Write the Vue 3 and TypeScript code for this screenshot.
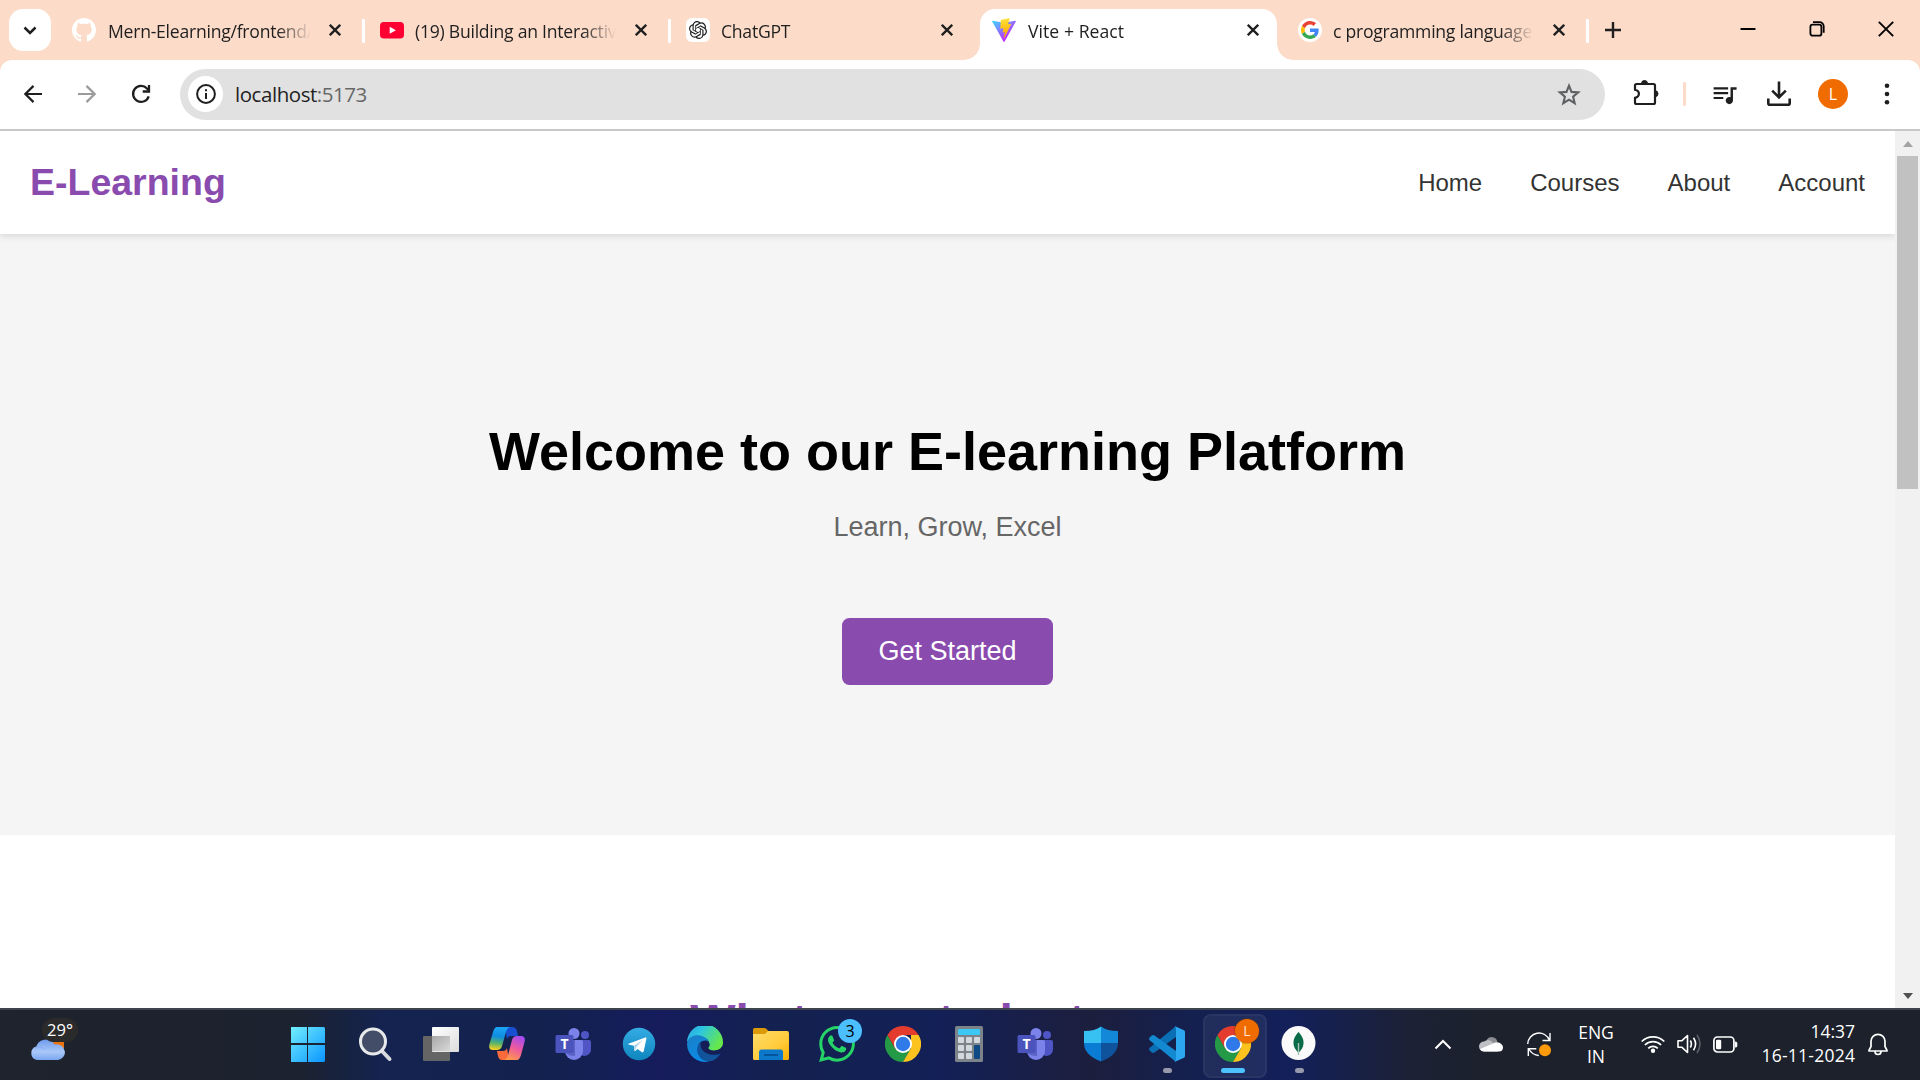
<script setup lang="ts">
interface Tab {
  id: string
  title: string
  active?: boolean
  divider?: boolean
}

const tabs: Tab[] = [
  { id: 'github', title: 'Mern-Elearning/frontend/src', divider: true },
  { id: 'youtube', title: '(19) Building an Interactive', divider: true },
  { id: 'chatgpt', title: 'ChatGPT' },
  { id: 'vite', title: 'Vite + React', active: true },
  { id: 'google', title: 'c programming language', divider: true },
]

const links: string[] = ['Home', 'Courses', 'About', 'Account']

const apps: string[] = [
  'start', 'search', 'views', 'copilot', 'teams', 'telegram', 'edge', 'folder',
  'whatsapp', 'chrome', 'calc', 'teams', 'shield', 'vscode', 'chromeL', 'mongo',
]
</script>

<template>
  <div class="screen">
    <div class="tabstrip">
      <button class="tab-search">
        <svg width="14" height="9" viewBox="0 0 14 9"><path d="M1.5 1.5 7 7l5.500-5.500" fill="none" stroke="#1f1f1f" stroke-width="2.500" /></svg>
      </button>
      <div v-for="t in tabs" :key="t.id" class="tab" :class="[{ active: t.active, divider: t.divider }, t.id]">
        <svg v-if="t.id === 'github'" class="fav" viewBox="0 0 16 16"><path fill="#fff" d="M8 0C3.58 0 0 3.58 0 8c0 3.54 2.29 6.53 5.47 7.59.4.07.55-.17.55-.38 0-.19-.01-.82-.01-1.490-2.010.37-2.530-.49-2.690-.94-.09-.23-.48-.94-.82-1.130-.28-.15-.68-.52-.01-.53.63-.01 1.080.58 1.230.82.72 1.210 1.870.87 2.330.66.07-.52.28-.87.51-1.070-1.780-.2-3.640-.89-3.640-3.950 0-.87.31-1.590.82-2.150-.08-.2-.36-1.020.08-2.120 0 0 .67-.21 2.200.82.64-.18 1.320-.27 2-.27.68 0 1.360.09 2 .27 1.530-1.040 2.200-.82 2.200-.82.44 1.100.16 1.920.08 2.120.51.56.82 1.270.82 2.150 0 3.070-1.870 3.750-3.650 3.950.29.25.54.73.54 1.480 0 1.070-.01 1.930-.01 2.200 0 .21.15.46.55.38A8.013 8.013 0 0 0 16 8c0-4.420-3.580-8-8-8z" /></svg>
        <svg v-else-if="t.id === 'youtube'" class="fav" viewBox="0 0 24 24"><rect y="4" width="24" height="16.500" rx="3.800" fill="#f03" /><path d="M9.700 8.700v7l6.200-3.500z" fill="#fff" /></svg>
        <svg v-else-if="t.id === 'chatgpt'" class="fav" viewBox="0 0 24 24"><rect width="24" height="24" rx="6" fill="#fff" /><g transform="translate(3 3) scale(.75)"><path fill="#1f1f1f" d="M22.2819 9.8211a5.9847 5.9847 0 0 0-.5157-4.9108 6.0462 6.0462 0 0 0-6.5098-2.9A6.0651 6.0651 0 0 0 4.9807 4.1818a5.9847 5.9847 0 0 0-3.9977 2.9 6.0462 6.0462 0 0 0 .7427 7.0966 5.98 5.98 0 0 0 .511 4.9107 6.051 6.051 0 0 0 6.5146 2.9001A5.9847 5.9847 0 0 0 13.2599 24a6.0557 6.0557 0 0 0 5.7718-4.2058 5.9894 5.9894 0 0 0 3.9977-2.9001 6.0557 6.0557 0 0 0-.7475-7.0729zm-9.022 12.6081a4.4755 4.4755 0 0 1-2.8764-1.0408l.1419-.0804 4.7783-2.7582a.7948.7948 0 0 0 .3927-.6813v-6.7369l2.02 1.1686a.071.071 0 0 1 .038.052v5.5826a4.504 4.504 0 0 1-4.4945 4.4944zm-9.6607-4.1254a4.4708 4.4708 0 0 1-.5346-3.0137l.142.0852 4.783 2.7582a.7712.7712 0 0 0 .7806 0l5.8428-3.3685v2.3324a.0804.0804 0 0 1-.0332.0615L9.74 19.9502a4.4992 4.4992 0 0 1-6.1408-1.6464zM2.3408 7.8956a4.485 4.485 0 0 1 2.3655-1.9728V11.6a.7664.7664 0 0 0 .3879.6765l5.8144 3.3543-2.0201 1.1685a.0757.0757 0 0 1-.071 0l-4.8303-2.7865A4.504 4.504 0 0 1 2.3408 7.872zm16.5963 3.8558L13.1038 8.364 15.1192 7.2a.0757.0757 0 0 1 .071 0l4.8303 2.7913a4.4944 4.4944 0 0 1-.6765 8.1042v-5.6772a.79.79 0 0 0-.407-.667zm2.0107-3.0231l-.142-.0852-4.7735-2.7818a.7759.7759 0 0 0-.7854 0L9.409 9.2297V6.8974a.0662.0662 0 0 1 .0284-.0615l4.8303-2.7866a4.4992 4.4992 0 0 1 6.6802 4.66zM8.3065 12.863l-2.02-1.1638a.0804.0804 0 0 1-.038-.0567V6.0742a4.4992 4.4992 0 0 1 7.3757-3.4537l-.142.0805L8.704 5.459a.7948.7948 0 0 0-.3927.6813zm1.0976-2.3654l2.602-1.4998 2.6069 1.4998v2.9994l-2.5974 1.4997-2.6067-1.4997Z" /></g></svg>
        <svg v-else-if="t.id === 'vite'" class="fav" viewBox="0 0 256 257">
          <defs>
            <linearGradient id="viteA" x1="0" x2=".58" y1=".08" y2=".79"><stop stop-color="#41D1FF" /><stop offset="1" stop-color="#BD34FE" /></linearGradient>
            <linearGradient id="viteB" x1=".43" x2=".5" y1=".02" y2=".9"><stop stop-color="#FFEA83" /><stop offset=".08" stop-color="#FFDD35" /><stop offset="1" stop-color="#FFA800" /></linearGradient>
          </defs>
          <path fill="url(#viteA)" d="M255.153 37.938 134.897 252.976c-2.483 4.440-8.862 4.466-11.382.048L.875 37.958c-2.746-4.814 1.371-10.646 6.827-9.670l120.385 21.517a6.537 6.537 0 0 0 2.322-.004l117.867-21.483c5.438-.991 9.574 4.796 6.877 9.620Z" />
          <path fill="url(#viteB)" d="M185.432.063 96.440 17.501a3.268 3.268 0 0 0-2.634 3.014l-5.474 92.456a3.268 3.268 0 0 0 3.997 3.378l24.777-5.718c2.318-.535 4.413 1.507 3.936 3.838l-7.361 36.047c-.495 2.426 1.782 4.500 4.151 3.780l15.304-4.649c2.372-.72 4.652 1.360 4.150 3.788l-11.698 56.621c-.732 3.542 3.979 5.473 5.943 2.437l1.313-2.028 72.516-144.720c1.215-2.423-.88-5.186-3.540-4.672l-25.505 4.922c-2.396.462-4.435-1.770-3.759-4.114l16.646-57.705c.677-2.350-1.370-4.583-3.769-4.113Z" />
        </svg>
        <svg v-else class="fav" viewBox="0 0 24 24"><circle cx="12" cy="12" r="12" fill="#fff" /><g transform="translate(3 3) scale(.375)"><path fill="#EA4335" d="M24 9.500c3.540 0 6.710 1.220 9.210 3.600l6.850-6.850C35.900 2.380 30.470 0 24 0 14.620 0 6.510 5.380 2.560 13.220l7.980 6.190C12.430 13.720 17.740 9.500 24 9.500z" /><path fill="#4285F4" d="M46.980 24.550c0-1.570-.15-3.090-.38-4.550H24v9.020h12.940c-.58 2.960-2.260 5.480-4.780 7.180l7.730 6c4.510-4.180 7.090-10.360 7.090-17.650z" /><path fill="#FBBC05" d="M10.530 28.590c-.48-1.450-.76-2.990-.76-4.590s.27-3.140.76-4.590l-7.980-6.190C.92 16.460 0 20.120 0 24c0 3.880.92 7.540 2.560 10.780l7.970-6.190z" /><path fill="#34A853" d="M24 48c6.480 0 11.930-2.130 15.890-5.810l-7.730-6c-2.150 1.450-4.920 2.300-8.160 2.300-6.260 0-11.570-4.220-13.470-9.910l-7.980 6.190C6.510 42.620 14.620 48 24 48z" /></g></svg>
        <span class="title">{{ t.title }}</span>
        <svg class="close" viewBox="0 0 12 12"><path d="M.8.8l10.400 10.400M11.200.8.8 11.200" stroke="#1f1f1f" stroke-width="2.300" /></svg>
      </div>
      <svg class="plus" viewBox="0 0 16 16"><path d="M8 0v16M0 8h16" stroke="#1f1f1f" stroke-width="2.400" /></svg>
      <div class="win">
        <svg width="16" height="16" viewBox="0 0 16 16"><path d="M.500 8h15" stroke="#000" stroke-width="2" /></svg>
        <svg width="16" height="16" viewBox="0 0 16 16"><g fill="none" stroke="#000" stroke-width="1.800"><rect x="1.400" y="3.700" width="11" height="11" rx="2.300" /><path d="M4 1.100h6.500a4.200 4.200 0 0 1 4.200 4.200v6.500" /></g></svg>
        <svg width="16" height="16" viewBox="0 0 16 16"><path d="M.800.800l14.400 14.400M15.200.8.800 15.200" stroke="#000" stroke-width="1.900" /></svg>
      </div>
    </div>

    <div class="toolbar">
      <svg class="back" width="18" height="18" viewBox="0 0 18 18"><path d="M18 9H1.500M9.500.900 1.400 9l8.100 8.100" fill="none" stroke="#1f1f1f" stroke-width="2.200" /></svg>
      <svg class="fwd" width="18" height="18" viewBox="0 0 18 18"><path d="M0 9h16.500M8.500.900 16.600 9l-8.100 8.100" fill="none" stroke="#9b9b9b" stroke-width="2.200" /></svg>
      <svg class="reload" width="20" height="20" viewBox="0 0 20 20"><path d="M17.700 12.300A8 8 0 1 1 16 4.500L17.700 6.200" fill="none" stroke="#1f1f1f" stroke-width="2.300" /><path d="M18 1v6.500h-6.300" fill="none" stroke="#1f1f1f" stroke-width="2.300" /></svg>
      <div class="omnibox">
        <span class="info"><svg width="20" height="20" viewBox="0 0 20 20"><circle cx="10" cy="10" r="8.900" fill="none" stroke="#1f1f1f" stroke-width="2" /><path d="M10 9v6M10 5.200v2" stroke="#1f1f1f" stroke-width="2" /></svg></span>
        <span class="url">localhost<i>:5173</i></span>
        <svg class="star" width="24" height="23" viewBox="0 0 24 23"><path d="m12 2.700 2.500 6.200 6.700.5-5.100 4.300 1.600 6.500-5.700-3.500-5.700 3.500 1.600-6.500-5.100-4.300 6.700-.5z" fill="none" stroke="#5f6164" stroke-width="2.100" /></svg>
      </div>
      <svg class="puzzle" width="26" height="26" viewBox="0 0 26 26"><path d="M3.500 4h17q1.500 0 1.500 1.500v17q0 1.500-1.500 1.500h-17Q2 24 2 22.500v-4.600c5.200-1.200 5.200-7 0-8.200V5.500Q2 4 3.500 4z" fill="none" stroke="#1f1f1f" stroke-width="2.200" /><path d="M8.500 3.500a3 3 0 0 1 6 0zM22 10.700a3 3 0 0 1 0 6z" fill="#1f1f1f" stroke="#1f1f1f" /></svg>
      <span class="rule"></span>
      <svg class="queue" width="29" height="29" viewBox="0 0 24 24"><path fill="#1f1f1f" d="M15 6H3v1.800h12V6zm0 4H3v1.800h12V10zM3 15.800h8V14H3v1.800zM17 6v8.180c-.31-.11-.65-.18-1-.18-1.660 0-3 1.340-3 3s1.340 3 3 3 3-1.340 3-3V8h3V6h-5z" /></svg>
      <svg class="dl" width="24" height="26" viewBox="0 0 24 26"><path d="M12 .500v16M5.200 9.700 12 16.500l6.800-6.800M1.300 17.500v4.700q0 1.500 1.500 1.500h18.400q1.500 0 1.500-1.500v-4.700" fill="none" stroke="#1f1f1f" stroke-width="2.600" /></svg>
      <span class="avatar">L</span>
      <svg class="dots" width="6" height="22" viewBox="0 0 6 22" fill="#1f1f1f"><circle cx="3" cy="2.700" r="2.300" /><circle cx="3" cy="11" r="2.300" /><circle cx="3" cy="19.300" r="2.300" /></svg>
    </div>

    <div class="viewport">
      <div class="page">
        <header>
          <div class="logo">E-Learning</div>
          <nav><a v-for="l in links" :key="l">{{ l }}</a></nav>
        </header>
        <section class="hero">
          <h1>Welcome to our E-learning Platform</h1>
          <p>Learn, Grow, Excel</p>
          <button class="cta">Get Started</button>
        </section>
        <h2>What our students say</h2>
      </div>
      <div class="scrollbar">
        <i class="up"></i>
        <i class="thumb"></i>
        <i class="down"></i>
      </div>
    </div>

    <footer class="taskbar">
      <div class="weather">
        <svg width="37" height="24" viewBox="0 0 37 24">
          <defs><linearGradient id="cl" x2="0" y2="1"><stop stop-color="#6f9bec" /><stop offset=".6" stop-color="#a9c8f8" /><stop offset="1" stop-color="#7aa6f0" /></linearGradient></defs>
          <path d="M24 5h11v6H24z" fill="#e8730c" /><path d="M7 11a10 10 0 0 1 18.500-3.500A8.500 8.500 0 0 1 36 15a8 8 0 0 1-7 8H8A7 7 0 0 1 7 9.500z" fill="url(#cl)" /><path d="M7 10q6-1 9 3M19 9q2-3 6-2" stroke="#86aef3" fill="none" />
        </svg>
        <span class="temp">29°</span>
      </div>
      <div class="apps">
        <div v-for="(a, i) in apps" :key="i" class="app" :class="{ current: a === 'chromeL', running: a === 'vscode' || a === 'mongo' }">
          <svg v-if="a === 'start'" viewBox="2 0 36 36">
            <defs><linearGradient id="st" x2="1" y2="1"><stop stop-color="#74f0ff" /><stop offset="1" stop-color="#0a95ff" /></linearGradient></defs>
            <path fill="url(#st)" d="M2.500 1H18v16H1V2.500Q1 1 2.500 1zM19 1h15.500Q36 1 36 2.500V17H19zM1 19h17v17H2.500Q1 36 1 34.500zM19 19h17v15.500q0 1.500-1.500 1.500H19z" />
          </svg>
          <svg v-else-if="a === 'search'" viewBox="1 0 36 36"><path d="m25 24 8.500 9" stroke="#d8dadd" stroke-width="4" stroke-linecap="round" /><circle cx="17" cy="15.500" r="12.500" fill="#434d68" stroke="#e8e9ea" stroke-width="3" /></svg>
          <svg v-else-if="a === 'views'" viewBox="0 0 36 36">
            <defs>
              <linearGradient id="tv" x2="1" y2="1"><stop stop-color="#fff" /><stop offset="1" stop-color="#dcdcdc" /></linearGradient>
              <linearGradient id="tw" x2="1" y2="1"><stop stop-color="#a8a8a8" /><stop offset="1" stop-color="#d8d8d8" /></linearGradient>
            </defs>
            <rect y="10" width="27" height="25" rx="1" fill="#656565" /><rect x="9" y="1" width="27" height="25" rx="1" fill="url(#tv)" /><path d="M9 10h18v15H9z" fill="url(#tw)" />
          </svg>
          <svg v-else-if="a === 'copilot'" viewBox="0 0 36 36">
            <defs>
              <linearGradient id="cpa" x1=".4" x2=".3" y2="1"><stop stop-color="#1ba4f5" /><stop offset=".4" stop-color="#0f8de0" /><stop offset=".7" stop-color="#56b36c" /><stop offset="1" stop-color="#ffd21d" /></linearGradient>
              <linearGradient id="cpb" x1=".7" x2=".3" y2="1"><stop stop-color="#a44cf0" /><stop offset=".5" stop-color="#ef5a9c" /><stop offset="1" stop-color="#ff9a4a" /></linearGradient>
            </defs>
            <path d="M16 1h7q4 0 5 4l1 5h-7q-3 0-4 3z" fill="#174fd0" /><path d="M20 34h-7q-3 0-4-4l-1-5h6q3 0 4-3z" fill="#fb6a3b" />
            <path d="M8 1h13q-3 1-4 5l-4 14q-1 4-5 4H4q-5 0-3.500-6L4 6q1.500-5 4-5z" fill="url(#cpa)" />
            <path d="M28 34H15q3-1 4-5l4-15q1-4 5-4h4q5 0 3.500 6L32 29q-1.500 5-4 5z" fill="url(#cpb)" />
          </svg>
          <svg v-else-if="a === 'teams'" viewBox="0 0 36 36">
            <circle cx="30" cy="9" r="4" fill="#4f55c4" /><path d="M25 14h9q2 0 2 2v7a6.500 6.500 0 0 1-11 5z" fill="#4f55c4" />
            <circle cx="19" cy="7.500" r="5.500" fill="#7b83eb" /><path d="M10 14h16q2 0 2 2v9a9 9 0 0 1-18 0z" fill="#7b83eb" />
            <path d="M10 14h10v16q-7 0-9-3z" fill="#5a62c6" /><rect x=".500" y="9" width="18" height="18" rx="1.500" fill="#4b53bc" />
            <text x="9.500" y="23" text-anchor="middle" font-family="Open Sans, sans-serif" font-size="14" font-weight="700" fill="#fff">T</text>
          </svg>
          <svg v-else-if="a === 'telegram'" viewBox="0 0 36 36">
            <defs><linearGradient id="tg" x2="0" y2="1"><stop stop-color="#34abe2" /><stop offset="1" stop-color="#0e86be" /></linearGradient></defs>
            <circle cx="18" cy="18" r="16.200" fill="url(#tg)" /><path d="M7.500 17.800 24.200 11.400q1.600-.5 1.200 1.400l-2.700 12.500q-.5 1.700-2 .8l-4.200-3.200-2.200 2q-.8.600-.9-.700l-.5-4.400-5.400-1.300q-1-.3 0-.7z" fill="#fff" /><path d="m13 19.800 8.500-5.700-6.200 7-.9 3.500z" fill="#a9d3e8" />
          </svg>
          <svg v-else-if="a === 'edge'" viewBox="0 0 36 36">
            <defs>
              <linearGradient id="ea" x2="1" y2=".5"><stop stop-color="#2b9fe0" /><stop offset=".4" stop-color="#2cc5e2" /><stop offset="1" stop-color="#66e84c" /></linearGradient>
              <linearGradient id="eb" x2=".4" y2="1"><stop stop-color="#1b7fc4" /><stop offset="1" stop-color="#0a8be8" /></linearGradient>
            </defs>
            <path d="M0 16A18 18 0 0 1 36 17c0 8-12 9-14.500 5.500-.5-1.500 2-2 1-5C21 11 6 7 0 16z" fill="url(#ea)" />
            <path d="M0 18C1 10 9 8 15 10c3 1 6 3 7 5-6-2-11 1-11 7 0 6 4 12 11 13.500A18 18 0 0 1 0 18z" fill="url(#eb)" />
            <path d="M14 16c-8 6-3 20 9 19.300 5-.8 8.500-4.300 10.500-7.800-6 3-17 1-19.500-6q-1-3 0-5.500z" fill="#11549c" />
          </svg>
          <svg v-else-if="a === 'folder'" viewBox="0 0 36 36">
            <defs><linearGradient id="fd" x2="1" y2="1"><stop stop-color="#ffdc6b" /><stop offset=".6" stop-color="#ffcb3a" /><stop offset="1" stop-color="#f7ae00" /></linearGradient></defs>
            <path d="M0 3.500Q0 2 1.500 2H11q1.500 0 2.500 1l2 2v7H0z" fill="#dd9a08" /><path d="M0 8h12l3-3h19q2 0 2 2v25.500q0 1.500-1.500 1.500h-33Q0 34 0 32.500z" fill="url(#fd)" /><path d="M6 34v-8q0-2.500 2.500-2.500h19Q30 23.500 30 26v8z" fill="#0b78ca" /><path d="M11 29h14" stroke="#064d91" stroke-width="1.600" />
          </svg>
          <svg v-else-if="a === 'whatsapp'" viewBox="0 0 24 24"><path fill="#25D366" d="M17.472 14.382c-.297-.149-1.758-.867-2.030-.967-.273-.099-.471-.148-.67.15-.197.297-.767.966-.94 1.164-.173.199-.347.223-.644.075-.297-.15-1.255-.463-2.390-1.475-.883-.788-1.480-1.761-1.653-2.059-.173-.297-.018-.458.13-.606.134-.133.298-.347.446-.52.149-.174.198-.298.298-.497.099-.198.05-.371-.025-.52-.075-.149-.669-1.612-.916-2.207-.242-.579-.487-.5-.669-.51-.173-.008-.371-.01-.57-.01-.198 0-.52.074-.792.372-.272.297-1.040 1.016-1.040 2.479 0 1.462 1.065 2.875 1.213 3.074.149.198 2.096 3.200 5.077 4.487.709.306 1.262.489 1.694.625.712.227 1.360.195 1.871.118.571-.085 1.758-.719 2.006-1.413.248-.694.248-1.289.173-1.413-.074-.124-.272-.198-.57-.347m-5.421 7.403h-.004a9.870 9.870 0 0 1-5.031-1.378l-.361-.214-3.741.982.998-3.648-.235-.374a9.860 9.860 0 0 1-1.510-5.260c.001-5.450 4.436-9.884 9.888-9.884 2.640 0 5.122 1.030 6.988 2.898a9.825 9.825 0 0 1 2.893 6.994c-.003 5.450-4.437 9.884-9.885 9.884m8.413-18.297A11.815 11.815 0 0 0 12.050 0C5.495 0 .16 5.335.157 11.892c0 2.096.547 4.142 1.588 5.945L.057 24l6.305-1.654a11.882 11.882 0 0 0 5.683 1.448h.005c6.554 0 11.890-5.335 11.893-11.893a11.821 11.821 0 0 0-3.480-8.413z" /></svg>
          <svg v-else-if="a === 'chrome' || a === 'chromeL'" viewBox="0 0 36 36">
            <path d="M2.400 9A18 18 0 0 1 33.600 9H18z" fill="#e33b2e" /><path d="M2.400 9A18 18 0 0 0 18 36l7.800-13.500-15.600 0z" fill="#249a47" /><path d="M33.600 9A18 18 0 0 1 18 36l7.800-13.500L26 9z" fill="#fcc31e" /><path d="M2.400 9 10.200 22.500 18 18V9z" fill="#e33b2e" />
            <circle cx="18" cy="18" r="9" fill="#fff" /><circle cx="18" cy="18" r="7.200" fill="#2f7ae8" />
          </svg>
          <svg v-else-if="a === 'calc'" viewBox="0 0 36 36">
            <rect x="4" width="28" height="36" rx="1.500" fill="#7c8389" /><rect x="7" y="3" width="22" height="6" rx=".8" fill="#3cc8f4" />
            <g fill="#d3d8de"><rect x="7" y="11" width="6" height="6" rx="1" /><rect x="15" y="11" width="6" height="6" rx="1" /><rect x="23" y="11" width="6" height="6" rx="1" /><rect x="7" y="19" width="6" height="6" rx="1" /><rect x="15" y="19" width="6" height="6" rx="1" /><rect x="7" y="27" width="6" height="6" rx="1" /><rect x="15" y="27" width="6" height="6" rx="1" /></g><rect x="23" y="19" width="6" height="14" rx="1" fill="#0f4a86" />
          </svg>
          <svg v-else-if="a === 'shield'" viewBox="0 0 36 36">
            <path d="M18 .500Q12 5 1 5v12h17z" fill="#36c1f2" /><path d="M18 .500Q24 5 35 5v12H18z" fill="#1488d8" /><path d="M1 17q0 12 17 18.500V17z" fill="#0b7cd3" /><path d="M35 17q0 12-17 18.500V17z" fill="#10539d" />
          </svg>
          <svg v-else-if="a === 'vscode'" viewBox="0 0 36 36">
            <path d="M27 0v11L5.500 26.500q-1.500 1-3-.2L.7 24.600q-1.300-1.400 0-2.800z" fill="#0a6fb5" /><path d="M27 36V25L5.500 9.500q-1.500-1-3 .2L.7 11.400q-1.300 1.400 0 2.800z" fill="#1389d2" /><path d="M25.500 0 35 4.200q1 .5 1 1.800v24q0 1.300-1 1.800L25.500 36q1.500-1 1.500-3V3q0-2-1.500-3z" fill="#2ba8f0" />
          </svg>
          <svg v-else viewBox="0 0 36 36"><circle cx="17.500" cy="17" r="17" fill="#fafafa" /><path d="M17.500 6c5 5 6.500 11 3.500 16.500q-1.500 2.500-3.500 4.200-2-1.700-3.500-4.200C11 17 12.500 11 17.500 6z" fill="#0a6b48" /><path d="M17.500 17v12" stroke="#a9c0b5" stroke-width="1.400" /></svg>
          <span v-if="a === 'whatsapp'" class="badge">3</span>
          <span v-if="a === 'chromeL'" class="badge profile">L</span>
        </div>
      </div>
      <div class="tray">
        <svg class="chev" width="18" height="11" viewBox="0 0 18 11"><path d="m1.500 9.500 7.500-7.500 7.500 7.500" fill="none" stroke="#fff" stroke-width="2" /></svg>
        <svg class="cloud" width="24" height="16" viewBox="0 0 24 16"><path d="M7.500 4a6 6 0 0 1 11 2l-6 4z" fill="#8b8d92" /><path d="M5 15.500a5 5 0 0 1 0-10q4-3 8 0l6 10z" fill="#bfc0c3" /><path d="m1 13 12-5q4-3 8-1 3 2 3 4 0 4.500-4 4.500H5q-3 0-4-2.500z" fill="#fff" /></svg>
        <svg class="sync" width="24" height="25" viewBox="0 0 24 25"><g fill="none" stroke="#fff" stroke-width="1.400"><path d="M.700 12A11.300 11.300 0 0 1 22.500 8.200M23 1v7.500h-7.500M1.300 24v-7.200h8M1.800 17q3.500 6 10 6.500" /></g><circle cx="18" cy="18.300" r="6" fill="#ff9a0b" /></svg>
        <div class="lang"><span>ENG</span><span>IN</span></div>
        <svg class="wifi" width="24" height="18" viewBox="0 0 24 18"><g fill="none" stroke="#fff" stroke-width="1.700"><path d="M.700 6.500a16 16 0 0 1 22.600 0M3.900 10a11.500 11.500 0 0 1 16.200 0M7.200 13.300a6.800 6.800 0 0 1 9.600 0" /></g><circle cx="12" cy="15.700" r="2.200" fill="#fff" /></svg>
        <svg class="vol" width="25" height="20" viewBox="0 0 25 20"><g fill="none" stroke="#fff" stroke-width="1.600" stroke-linejoin="round"><path d="M1 6.700h4l5.500-5.200v17L5 13.300H1z" /><path d="M13.300 6.500q2.200 3.500 0 7M16.500 3.800q4.200 6.200 0 12.400" /></g><path d="M20 1q6 9 0 18" fill="none" stroke="#5b5f68" stroke-width="1.600" /></svg>
        <svg class="bat" width="25" height="17" viewBox="0 0 25 17"><rect x=".900" y="1" width="20" height="15" rx="3.500" fill="none" stroke="#fff" stroke-width="1.700" /><rect x="3" y="3.700" width="5.200" height="9.600" rx="1.200" fill="#fff" /><path d="M22 5.500q2.300 0 2.300 1.500v3q0 1.500-2.300 1.500z" fill="#fff" /></svg>
        <div class="clock"><span>14:37</span><span class="date">16-11-2024</span></div>
        <svg class="bell" width="20" height="23" viewBox="0 0 20 23"><path d="M10 1.300a7 7 0 0 1 7 7v5.200l2 3.900q.2.600-.5.600h-17q-.7 0-.5-.6l2-3.900V8.300a7 7 0 0 1 7-7zM7 18.500a3 3 0 0 0 6 0" fill="none" stroke="#fff" stroke-width="1.700" /></svg>
      </div>
    </footer>
  </div>
</template>

<style>
body { margin: 0; overflow: hidden; }
</style>

<style scoped>
* { box-sizing: border-box; }
svg { display: block; flex: none; }
.screen { width: 1920px; height: 1080px; display: flex; flex-direction: column; background: #fcdbc9; overflow: hidden; font-family: "Open Sans", "Noto Sans", sans-serif; }
.tabstrip { height: 60px; flex: none; display: flex; padding: 9px 0 0 9px; }
.tab-search { width: 42px; height: 42px; border: 0; border-radius: 14px; background: #fff; display: flex; align-items: center; justify-content: center; padding: 0; margin-right: 11px; flex: none; }
.tab { position: relative; width: 297px; height: 51px; margin-right: 9px; padding: 0 18px 9px 12px; display: flex; align-items: center; border-radius: 15px 15px 0 0; flex: none; }
.tab.github { padding-left: 10px; }
.tab.active { background: #fff; }
.tab.active::before, .tab.active::after { content: ""; position: absolute; bottom: 0; width: 16px; height: 16px; }
.tab.active::before { left: -16px; background: radial-gradient(circle at 0 0, transparent 15.500px, #fff 16px); }
.tab.active::after { right: -16px; background: radial-gradient(circle at 100% 0, transparent 15.500px, #fff 16px); }
.tab.divider::after { content: ""; position: absolute; right: -6px; top: 10px; width: 3px; height: 24px; border-radius: 1px; background: #fff; }
.fav { width: 24px; height: 24px; margin-right: 12px; }
.title { flex: 1; height: 28px; line-height: 28px; font-size: 17.600px; letter-spacing: -.25px; color: #1f1f1f; white-space: nowrap; overflow: hidden; margin-right: 18px; padding-top: 1px; -webkit-mask-image: linear-gradient(90deg, #000 calc(100% - 34px), transparent); mask-image: linear-gradient(90deg, #000 calc(100% - 34px), transparent); }
.vite .title { letter-spacing: .05px; }
.chatgpt .title, .google .title, .youtube .title { margin-left: -1px; margin-right: 19px; }
.close { width: 12px; height: 12px; }
.plus { width: 16px; height: 16px; margin: 13px 0 0 13px; }
.win { margin: 12px 26px 0 auto; display: flex; gap: 53px; }
.toolbar { height: 71px; flex: none; display: flex; align-items: center; padding-bottom: 1px; background: #fff; border-bottom: 2px solid #c8c8c8; border-radius: 12px 12px 0 0; padding-left: 24px; }
.fwd { margin-left: 36px; }
.reload { margin-left: 35px; }
.omnibox { width: 1425px; height: 51px; margin-left: 29px; border-radius: 26px; background: #e1e1e1; display: flex; align-items: center; padding: 0 24px 0 8px; flex: none; }
.info { width: 35px; height: 36px; border-radius: 50%; background: #fff; display: flex; align-items: center; justify-content: center; }
.url { flex: 1; margin-left: 12px; font-size: 20.500px; letter-spacing: -.45px; color: #1f1f1f; }
.url i { font-style: normal; color: #666; }
.puzzle { margin: -3px 0 0 28px; }
.rule { width: 3px; height: 24px; background: #fcdbc9; border-radius: 1px; margin-left: 24px; }
.queue { margin-left: 24px; }
.dl { margin-left: 28px; }
.avatar { width: 30px; height: 30px; margin-left: 27px; border-radius: 50%; background: #f06c00; color: #fff; font-size: 16px; line-height: 30px; text-align: center; }
.dots { margin-left: 36px; }
.viewport { height: 877px; flex: none; display: flex; }
.page { width: 1895px; height: 877px; overflow: hidden; background: #fff; font-family: "Liberation Sans", Arial, sans-serif; }
header { position: relative; height: 103px; padding: 0 30px; display: flex; align-items: center; justify-content: space-between; background: #fff; box-shadow: 0 3px 6px rgba(0, 0, 0, .1); }
.logo { font-size: 37.500px; font-weight: 700; color: #8a4baf; }
nav { display: flex; gap: 48px; font-size: 24px; color: #333; }
.hero { height: 601px; background: #f5f5f5; display: flex; flex-direction: column; align-items: center; padding-top: 186px; }
h1 { margin: 0; font-size: 54px; line-height: 62px; color: #000; }
.hero p { margin: 30px 0 0; font-size: 27px; line-height: 31px; color: #666; }
.cta { margin-top: 75px; width: 211px; height: 67px; padding: 0; border: 0; border-radius: 7.500px; background: #8a4baf; color: #fff; font: 27px "Liberation Sans", Arial, sans-serif; }
h2 { margin: 159px 0 0; font-size: 48px; line-height: 55px; text-align: center; color: #8a4baf; }
.scrollbar { width: 25px; height: 877px; background: #f1f1f1; display: flex; flex-direction: column; align-items: center; }
.up { margin-top: 10px; border: 5.500px solid transparent; border-top: 0; border-bottom: 6px solid #a3a3a3; }
.thumb { width: 21px; height: 333px; margin-top: 9px; background: #c1c1c1; }
.down { margin: auto 0 9px; border: 5.500px solid transparent; border-bottom: 0; border-top: 6px solid #505050; }
.taskbar { height: 72px; flex: none; display: flex; border-top: 2px solid #3e444e; color: #fff; background: linear-gradient(90deg, #1e232d 0, #1c222f 300px, #14234f 380px, #132150 560px, #161c5c 660px, #132150 780px, #132057 940px, #1c1e3d 1090px, #14204f 1190px, #13205a 1290px, #1c2135 1410px, #1c212b 1500px, #1c212b 100%); }
.weather { position: relative; width: 244px; padding: 27px 0 0 29px; }
.temp { position: absolute; left: 42px; top: 8px; width: 36px; height: 24px; border-radius: 12px; background: #2c2b2b; font-size: 16.500px; line-height: 24px; text-align: center; }
.apps { margin-left: 32px; display: flex; }
.app { position: relative; width: 66px; height: 70px; padding: 16px 15px 0; }
.app > svg { width: 36px; height: 36px; }
.app.current::before { content: ""; position: absolute; left: 3px; top: 4px; width: 60px; height: 60px; border: 2px solid rgba(255, 255, 255, .04); border-radius: 8px; background: rgba(255, 255, 255, .06); }
.app.current::after, .app.running::after { content: ""; position: absolute; left: 21px; top: 58px; width: 24px; height: 5px; border-radius: 3px; background: #4cc2ff; }
.app.running::after { left: 29px; width: 9px; background: #9799ab; }
.app > svg { position: relative; }
.badge { position: absolute; left: 34px; top: 9px; width: 24px; height: 24px; border-radius: 50%; background: #4cbfff; color: #000; font-size: 16px; line-height: 24px; text-align: center; }
.badge.profile { left: 35px; background: #f06c00; color: #ffe3cc; font-size: 14px; box-shadow: 0 0 2px #7a3a00; }
.tray { margin-left: auto; display: flex; align-items: center; height: 68px; }
.lang, .clock { display: flex; flex-direction: column; font-size: 17.500px; line-height: 24px; }
.lang { width: 50px; text-align: center; margin-left: 20px; }
.clock { width: 94px; align-items: flex-end; margin-left: 23px; margin-top: -2px; white-space: nowrap; }
.date { letter-spacing: .25px; margin-right: -.25px; }
.cloud { margin-left: 27px; }
.sync { margin-left: 24px; }
.wifi { margin-left: 20px; }
.vol { margin-left: 12px; }
.bat { margin-left: 11px; }
.bell { margin: 0 32px 0 13px; }
</style>
